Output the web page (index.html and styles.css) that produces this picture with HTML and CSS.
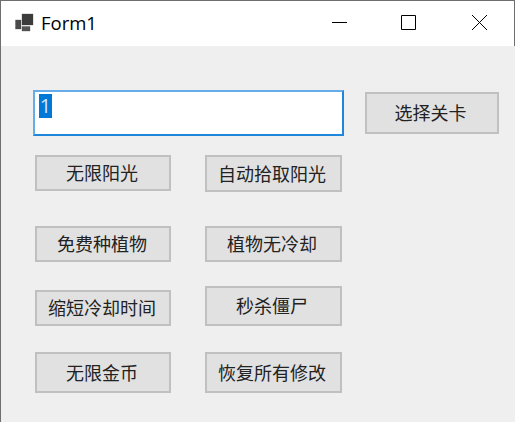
FILE: index.html
```html
<!DOCTYPE html>
<html lang="zh-CN">
<head>
<meta charset="utf-8">
<title>Form1</title>
<link rel="stylesheet" href="styles.css">
</head>
<body>
<div class="window">
  <header class="titlebar">
    <svg class="app-icon" width="20" height="21" viewBox="0 0 20 21"><g stroke="#3c3c3c" stroke-opacity=".3" stroke-width="1"><path fill="#3c3c3c" d="M7 1h11v11H7z"/><path fill="#4a4a4a" d="M0.500 7h5.500v9H0.500z"/><path fill="#555" d="M7 13.500h8v4.500H7z"/></g></svg>
    <span class="title">Form1</span>
    <div class="controls">
      <svg class="ctl" width="46" height="46" viewBox="0 0 46 46"><path d="M7 21.500h15" stroke="#000" fill="none"/></svg>
      <svg class="ctl" width="72" height="46" viewBox="0 0 72 46"><path d="M30.500 14.500h14v14h-14z" stroke="#000" fill="none"/></svg>
      <svg class="ctl" width="72" height="46" viewBox="0 0 72 46"><path d="M29 14l15 15M44 14L29 29" stroke="#000" fill="none"/></svg>
    </div>
  </header>
  <main class="form">
    <div class="top-row">
      <div class="textbox"><span class="selected">1</span></div>
      <button class="btn select-btn">选择关卡</button>
    </div>
    <div class="columns">
      <div class="col col-left">
        <button class="btn h36">无限阳光</button>
        <button class="btn h36 gap35">免费种植物</button>
        <button class="btn h36 gap28">缩短冷却时间</button>
        <button class="btn h41 gap26">无限金币</button>
      </div>
      <div class="col col-right">
        <button class="btn h37">自动拾取阳光</button>
        <button class="btn h36 gap34">植物无冷却</button>
        <button class="btn h40 gap24">秒杀僵尸</button>
        <button class="btn h41 gap26">恢复所有修改</button>
      </div>
    </div>
  </main>
</div>
</body>
</html>
```

FILE: styles.css
```css
* { box-sizing: border-box; }
html, body { margin: 0; padding: 0; }
body { width: 515px; height: 422px; overflow: hidden; background: #efefef; }
.window {
  width: 515px; height: 422px;
  border-top: 1px solid #6e6e6e;
  border-left: 1px solid #6e6e6e;
  display: flex; flex-direction: column;
  font-family: "Noto Sans CJK SC", "Noto Sans", sans-serif;
}
.titlebar {
  height: 45px; flex: none; background: #fff;
  display: flex; align-items: center;
  padding-left: 14px;
  border-right: 1px solid #6e6e6e;
}
.app-icon { flex: none; }
.title { font-family: "Open Sans", sans-serif; font-size: 18.5px; color: #000; margin-left: 6px; padding-bottom: 2px; }
.controls { margin-left: auto; display: flex; margin-right: -1px; }
.ctl { display: block; }
.form { flex: 1; padding: 44px 0 0 32px; background: #efefef; }
.top-row { display: flex; align-items: flex-start; }
.textbox {
  width: 311px; height: 46px; background: #fff;
  border: 2px solid #1e86dc;
  border-top-color: #64ade8; border-left-color: #64ade8;
  padding: 2px 0 0 4px;
  line-height: 24px;
}
.selected {
  display: inline-block; width: 13px; height: 24px; background: #0078d7; color: #cfe6fa;
  font-family: "Open Sans", sans-serif; font-size: 20px; text-align: center; line-height: 24px;
}
.btn {
  display: flex; align-items: center; justify-content: center;
  padding: 0 3px 2px 0; margin: 0;
  background: #e1e1e1; border: 2px solid #c0c0c0;
  color: #222;
  font-family: "Noto Sans CJK SC", sans-serif; font-size: 18px; line-height: 1;
}
.select-btn { width: 134px; height: 42px; margin: 2px 0 0 21px; }
.columns { display: flex; margin-top: 19px; }
.col { display: flex; flex-direction: column; }
.col-left { width: 136px; margin-left: 2px; }
.col-left .btn { width: 136px; padding-right: 2px; }
.col-right { margin-left: 34px; }
.col-right .btn { width: 137px; }
.h36 { height: 36px; } .h37 { height: 37px; } .h40 { height: 40px; } .h41 { height: 41px; }
.gap24 { margin-top: 24px; } .gap26 { margin-top: 26px; } .gap28 { margin-top: 28px; }
.gap34 { margin-top: 34px; } .gap35 { margin-top: 35px; }
```
